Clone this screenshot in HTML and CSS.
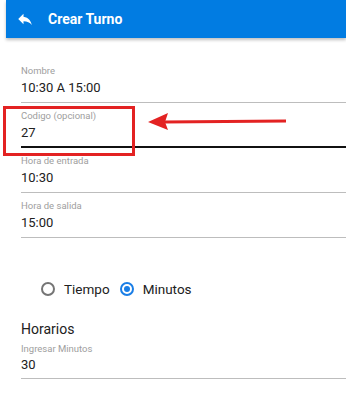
FILE: index.html
```html
<!DOCTYPE html>
<html lang="es">
<head>
<meta charset="utf-8">
<title>Crear Turno</title>
<link rel="stylesheet" href="styles.css">
</head>
<body>
<div class="app">
  <header class="bar">
    <svg class="back" viewBox="0 0 24 24" width="18" height="18" aria-hidden="true"><path d="M10 9V5l-7 7 7 7v-4.1c5 0 8.5 1.6 11 5.1-1-5-4-10-11-11z" fill="#fff"/></svg>
    <h1 class="title">Crear Turno</h1>
  </header>
  <main class="form">
    <div class="field">
      <div class="label">Nombre</div>
      <div class="value">10:30 A 15:00</div>
    </div>
    <div class="field focused">
      <div class="label">Codigo (opcional)</div>
      <div class="value">27</div>
    </div>
    <div class="field">
      <div class="label">Hora de entrada</div>
      <div class="value">10:30</div>
    </div>
    <div class="field">
      <div class="label">Hora de salida</div>
      <div class="value">15:00</div>
    </div>
    <div class="radios">
      <span class="radio"></span><span class="radio-text">Tiempo</span>
      <span class="radio checked"></span><span class="radio-text">Minutos</span>
    </div>
    <div class="section">Horarios</div>
    <div class="field last">
      <div class="label">Ingresar Minutos</div>
      <div class="value">30</div>
    </div>
  </main>
  <div class="highlight"></div>
  <svg class="arrow" width="140" height="26" viewBox="0 0 140 26" aria-hidden="true">
    <line x1="16" y1="13" x2="138" y2="12" stroke="#e32222" stroke-width="3"/>
    <polygon points="0,13 20,4 17,13 20,21" fill="#e32222"/>
  </svg>
</div>
</body>
</html>
```

FILE: styles.css
```css
* { box-sizing: border-box; }
html, body { margin: 0; padding: 0; background: #fff; }
body { font-family: Roboto, "Noto Sans", Arial, sans-serif; color: #212121; }

.app {
  position: relative;
  width: 346px;
  height: 404px;
  overflow: hidden;
  padding-left: 6px;
}

.bar {
  height: 38px;
  background: #017ce2;
  display: flex;
  align-items: center;
  padding-left: 10px;
  box-shadow: 0 2px 3px rgba(0,0,0,0.25);
}
.back { margin-top: 0px; }
.title {
  margin: 0 0 0 14px;
  font-size: 14px;
  font-weight: 700;
  color: #fff;
  letter-spacing: 0;
}

.form {
  display: flex;
  flex-direction: column;
  padding: 20px 0 0 15px;
}

.field {
  height: 45px;
  padding-top: 7px;
  border-bottom: 1px solid #bdbdbd;
}
.field.focused { border-bottom: 2px solid #111; height: 45px; }
.label {
  font-size: 9.5px;
  line-height: 12px;
  color: #9e9e9e;
}
.value {
  margin-top: 2px;
  font-size: 13px;
  line-height: 18px;
  color: #212121;
}

.radios {
  display: flex;
  align-items: center;
  height: 20px;
  margin-top: 41px;
  padding-left: 20px;
  font-size: 13.5px;
}
.radio {
  width: 14px;
  height: 14px;
  border-radius: 50%;
  border: 2px solid #757575;
  display: inline-block;
  position: relative;
}
.radio.checked { border-color: #1a7ee6; margin-left: 10px; }
.radio.checked::after {
  content: "";
  position: absolute;
  left: 2px; top: 2px;
  width: 6px; height: 6px;
  border-radius: 50%;
  background: #1a7ee6;
}
.radio-text { margin-left: 9px; color: #212121; }

.section {
  margin-top: 22px;
  font-size: 14px;
  line-height: 16px;
  color: #212121;
}
.field.last { height: 42px; padding-top: 6px; }
.field.last .value { margin-top: 1px; }

.highlight {
  position: absolute;
  left: 3px;
  top: 106px;
  width: 132px;
  height: 50px;
  border: 3px solid #e32222;
}
.arrow {
  position: absolute;
  left: 148px;
  top: 109px;
}
```
